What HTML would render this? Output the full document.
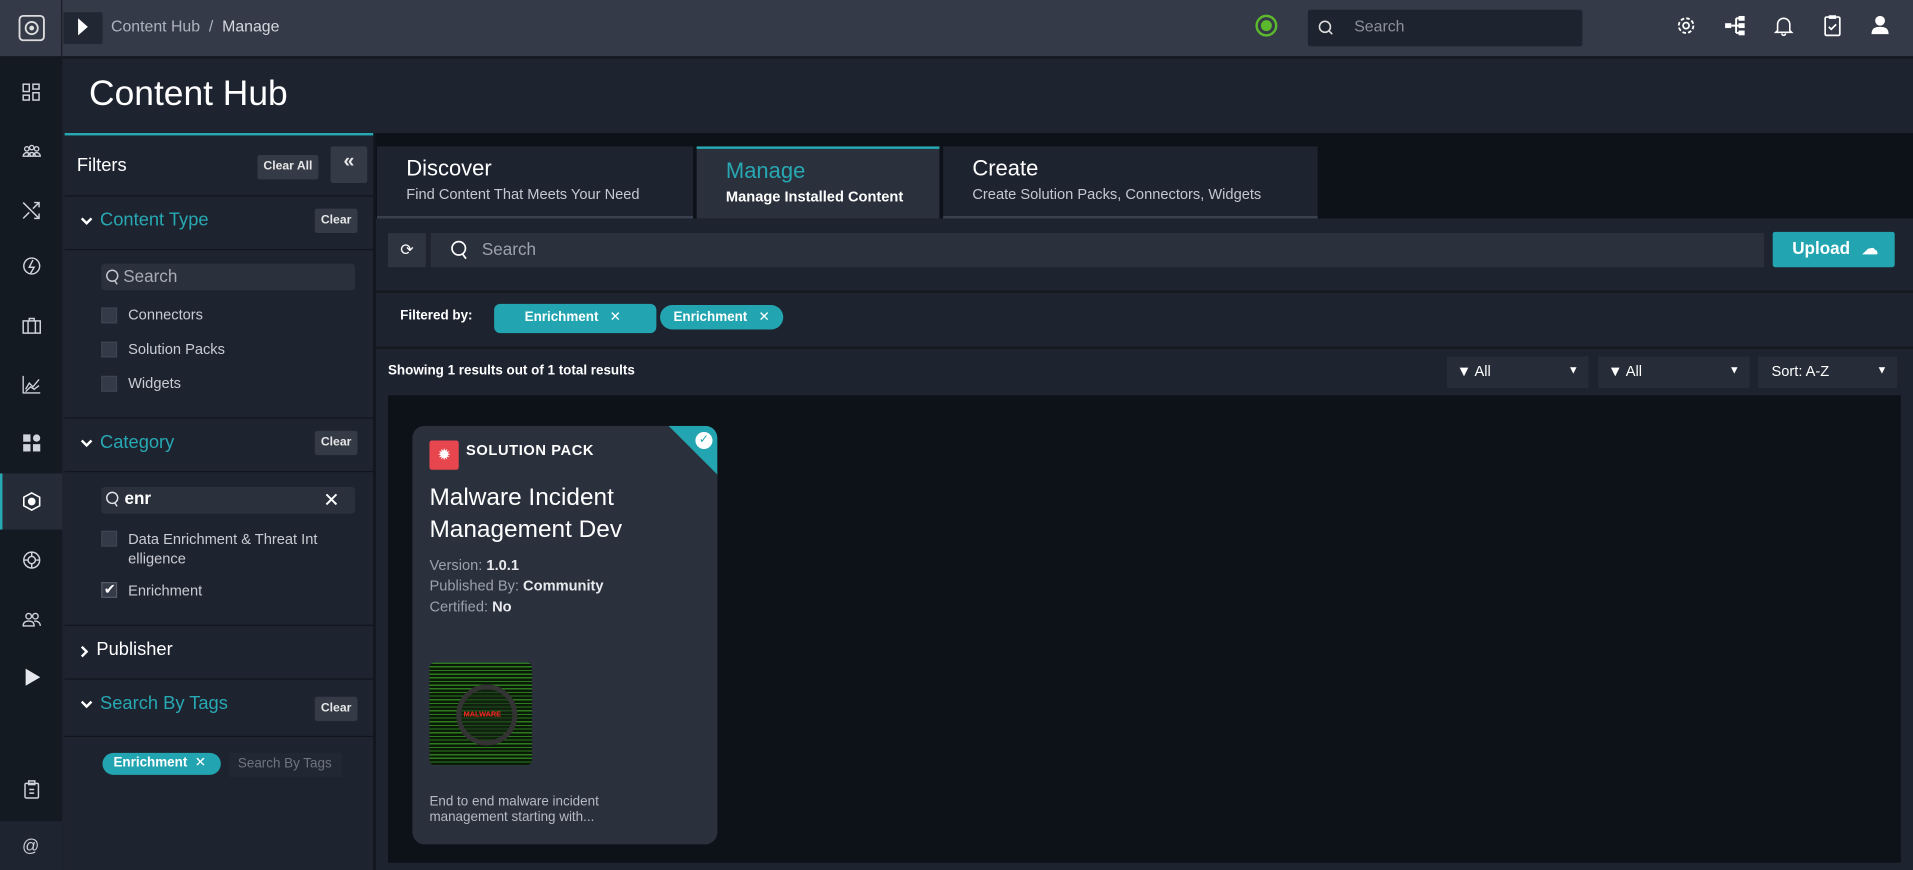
<!DOCTYPE html>
<html><head><meta charset="utf-8"><style>
*{box-sizing:border-box;margin:0;padding:0}
html,body{width:1913px;height:870px;overflow:hidden;background:#1e2330;font-family:"Liberation Sans",sans-serif;color:#e8eaee}
#s{position:absolute;left:0;top:0;width:1568px;height:713px;transform:scale(1.22003,1.2202);transform-origin:0 0;background:#1e2330}
.a{position:absolute}
.teal{color:#27a9b3}
.btn{position:absolute;background:#343a46;color:#e6e6e6;font-size:10px;font-weight:bold;border-radius:2px;text-align:center}
.cb{position:absolute;width:13px;height:13px;background:#343a48;border:1px solid #3d4452}
.lbl{position:absolute;font-size:12px;color:#c9ccd2}
.sep{position:absolute;left:53px;width:253px;height:1px;background:#11151c}
.ico{position:absolute;left:18px;width:16px;height:16px}
</style></head><body><div id="s">
<div class="a" style="left:0;top:0;width:1568px;height:48px;background:#343a48;border-bottom:2px solid #141820"></div>
<div class="a" style="left:0;top:0;width:51px;height:713px;background:#141a22"></div>
<div class="a" style="left:0;top:0;width:51px;height:48px;background:#343a48;border-right:1px solid #1a1f28;border-bottom:2px solid #141820"></div>
<svg class="a" style="left:14px;top:11px" width="24" height="24" viewBox="0 0 24 24"><rect x="2" y="2" width="20" height="20" rx="3" fill="none" stroke="#ddd" stroke-width="1.5"/><circle cx="12" cy="12" r="5" fill="none" stroke="#ddd" stroke-width="1.5"/><circle cx="12" cy="12" r="2" fill="#ddd"/></svg>
<div class="a" style="left:52px;top:10px;width:32px;height:26px;background:#222833"></div>
<div class="a" style="left:64px;top:15px;width:0;height:0;border-left:8px solid #fff;border-top:7px solid transparent;border-bottom:7px solid transparent"></div>
<div class="a" style="left:91px;top:14px;font-size:13px;color:#aeb4be">Content Hub &nbsp;/&nbsp; <span style="color:#d6d9de">Manage</span></div>
<svg class="a" style="left:1028px;top:11px" width="20" height="20" viewBox="0 0 20 20"><circle cx="10" cy="10" r="8" fill="none" stroke="#5cb82c" stroke-width="2"/><circle cx="10" cy="10" r="4.5" fill="#5cb82c"/></svg>
<div class="a" style="left:1072px;top:8px;width:225px;height:30px;background:#1e2330;border-radius:2px"></div>
<svg class="a" style="left:1080px;top:16px" width="14" height="14" viewBox="0 0 14 14"><circle cx="6" cy="6" r="4.5" fill="none" stroke="#ddd" stroke-width="1.3"/><path d="M9 9l3 3" stroke="#ddd" stroke-width="1.3"/></svg>
<div class="a" style="left:1110px;top:14px;font-size:13px;color:#8b919b">Search</div>
<svg class="a" style="left:1373px;top:12px" width="18" height="18" viewBox="0 0 18 18"><circle cx="9" cy="9" r="6" fill="none" stroke="#fff" stroke-width="1.5" stroke-dasharray="3 1.7"/><circle cx="9" cy="9" r="2.5" fill="none" stroke="#fff" stroke-width="1.4"/></svg>
<svg class="a" style="left:1413px;top:13px" width="18" height="16" viewBox="0 0 18 16"><rect x="1" y="6" width="5" height="4" fill="#fff"/><path d="M6 8h4M10 2v12M10 2h6M10 8h6M10 14h6" stroke="#fff" stroke-width="1.6"/><rect x="12" y="0" width="5" height="4" fill="#fff"/><rect x="12" y="6" width="5" height="4" fill="#fff"/><rect x="12" y="12" width="5" height="4" fill="#fff"/></svg>
<svg class="a" style="left:1453px;top:12px" width="18" height="18" viewBox="0 0 18 18"><path d="M4 13V8a5 5 0 0 1 10 0v5l1.5 1.5h-13z M7.5 15.5a1.5 1.5 0 0 0 3 0" fill="none" stroke="#fff" stroke-width="1.3"/></svg>
<svg class="a" style="left:1494px;top:12px" width="16" height="18" viewBox="0 0 16 18"><rect x="2" y="2" width="12" height="15" rx="1" fill="none" stroke="#fff" stroke-width="1.4"/><rect x="5" y="0.5" width="6" height="3" fill="#fff"/><path d="M5 10l2 2 4-4" fill="none" stroke="#fff" stroke-width="1.4"/></svg>
<svg class="a" style="left:1533px;top:12px" width="16" height="17" viewBox="0 0 16 17"><circle cx="8" cy="5" r="4" fill="#fff"/><path d="M1 16c0-5 3-6 7-6s7 1 7 6z" fill="#fff"/></svg>
<svg class="ico" style="top:68px" viewBox="0 0 16 16" fill="none" stroke="#cfd4dc" stroke-width="1.2"><rect x="1" y="1" width="5" height="6"/><rect x="9" y="1" width="5" height="4"/><rect x="1" y="10" width="5" height="4"/><rect x="9" y="8" width="5" height="6"/></svg>
<svg class="ico" style="top:116px" viewBox="0 0 16 16" fill="none" stroke="#cfd4dc" stroke-width="1.1"><circle cx="4" cy="6" r="1.8"/><circle cx="8" cy="5" r="1.8"/><circle cx="12" cy="6" r="1.8"/><path d="M1 12c0-2 2-3 3-3s3 1 3 3zM5 12c0-2 2-3 3-3s3 1 3 3zM9 12c0-2 2-3 3-3s3 1 3 3z"/></svg>
<svg class="ico" style="top:164px" viewBox="0 0 16 16" fill="none" stroke="#cfd4dc" stroke-width="1.2"><path d="M1 2l13 13M14 2L9 7M6 10l-5 5M10 2h4v4M14 11v4h-4"/></svg>
<svg class="ico" style="top:210px" viewBox="0 0 16 16" fill="none" stroke="#cfd4dc" stroke-width="1.2"><circle cx="8" cy="8" r="6.5"/><path d="M9 3L6 9h4l-3 5" /></svg>
<svg class="ico" style="top:259px" viewBox="0 0 16 16" fill="none" stroke="#cfd4dc" stroke-width="1.2"><rect x="1" y="4" width="14" height="10"/><path d="M6 4V2h4v2M5 4v10M11 4v10"/></svg>
<svg class="ico" style="top:307px" viewBox="0 0 16 16" fill="none" stroke="#cfd4dc" stroke-width="1.1"><path d="M1 1v14h14M3 12l3-5 3 3 5-6M3 14l4-4 3 2 4-3"/></svg>
<svg class="ico" style="top:355px" viewBox="0 0 16 16" fill="#cfd4dc"><rect x="1" y="1" width="6" height="6"/><circle cx="12" cy="4" r="3"/><rect x="1" y="9" width="6" height="6"/><rect x="9" y="9" width="6" height="6"/></svg>
<div class="a" style="left:0;top:388px;width:51px;height:46px;background:#252c38;border-left:2px solid #27a9b3"></div>
<svg class="ico" style="top:403px" viewBox="0 0 16 16" fill="none" stroke="#fff" stroke-width="1.3"><path d="M8 1l6.5 3.5v7L8 15l-6.5-3.5v-7z"/><circle cx="8" cy="8" r="2.5" fill="#fff"/></svg>
<svg class="ico" style="top:451px" viewBox="0 0 16 16" fill="none" stroke="#cfd4dc" stroke-width="1.2"><circle cx="8" cy="8" r="6.5"/><circle cx="8" cy="8" r="3"/><path d="M8 1.5v3.5M8 11v3.5M1.5 8H5M11 8h3.5"/></svg>
<svg class="ico" style="top:499px" viewBox="0 0 16 16" fill="none" stroke="#cfd4dc" stroke-width="1.1"><circle cx="5.5" cy="6" r="2.3"/><circle cx="11" cy="6" r="2.3"/><path d="M1 14c0-3 2-4 4.5-4s4.5 1 4.5 4zM10 10c3 0 5 1 5 4"/></svg>
<svg class="ico" style="top:547px" viewBox="0 0 16 16"><path d="M3 1l12 7-12 7z" fill="#e4e7ec"/></svg>
<svg class="ico" style="top:639px" viewBox="0 0 16 16" fill="none" stroke="#cfd4dc" stroke-width="1.2"><rect x="2.5" y="3" width="11" height="12" rx="1"/><rect x="5.5" y="1" width="5" height="3"/><path d="M6 8h4M6 11h4"/></svg>
<div class="a" style="left:0;top:673px;width:51px;height:40px;background:#1e2430"></div>
<div class="a" style="left:18px;top:685px;font-size:14px;color:#c8ccd4">@</div>
<div class="a" style="left:73px;top:61px;font-size:29px;color:#fff">Content Hub</div>
<div class="a" style="left:53px;top:109px;width:253px;height:604px;background:#1e2330;border-top:2px solid #27a9b3"></div>
<div class="a" style="left:306px;top:109px;width:2px;height:604px;background:#11151c"></div>
<div class="a" style="left:63px;top:127px;font-size:15px;color:#fff">Filters</div>
<div class="btn" style="left:211px;top:127px;width:50px;height:20px;line-height:20px">Clear All</div>
<div class="btn" style="left:271px;top:120px;width:30px;height:30px;line-height:26px;font-size:16px">«</div>
<div class="sep" style="top:160px"></div>
<svg class="a" style="left:66px;top:178px" width="10" height="7" viewBox="0 0 10 7"><path d="M1 1l4 4 4-4" fill="none" stroke="#fff" stroke-width="2"/></svg>
<div class="a teal" style="left:82px;top:172px;font-size:15px">Content Type</div>
<div class="btn" style="left:258px;top:171px;width:35px;height:20px;line-height:20px">Clear</div>
<div class="sep" style="top:204px"></div>
<div class="a" style="left:83px;top:216px;width:208px;height:22px;background:#2a303c;border-radius:3px"></div>
<svg class="a" style="left:86px;top:220px" width="13" height="15" viewBox="0 0 13 15"><circle cx="6" cy="6" r="4.5" fill="none" stroke="#c5c9d0" stroke-width="1.2"/><path d="M8 10l2 3" stroke="#c5c9d0" stroke-width="1.2"/></svg>
<div class="a" style="left:101px;top:218px;font-size:14px;color:#a7acb5">Search</div>
<div class="cb" style="left:83px;top:252px"></div><div class="lbl" style="left:105px;top:251px">Connectors</div>
<div class="cb" style="left:83px;top:280px"></div><div class="lbl" style="left:105px;top:279px">Solution Packs</div>
<div class="cb" style="left:83px;top:308px"></div><div class="lbl" style="left:105px;top:307px">Widgets</div>
<div class="sep" style="top:342px"></div>
<svg class="a" style="left:66px;top:360px" width="10" height="7" viewBox="0 0 10 7"><path d="M1 1l4 4 4-4" fill="none" stroke="#fff" stroke-width="2"/></svg>
<div class="a teal" style="left:82px;top:354px;font-size:15px">Category</div>
<div class="btn" style="left:258px;top:353px;width:35px;height:20px;line-height:20px">Clear</div>
<div class="sep" style="top:386px"></div>
<div class="a" style="left:83px;top:399px;width:208px;height:22px;background:#2a303c;border-radius:3px"></div>
<svg class="a" style="left:86px;top:402px" width="13" height="15" viewBox="0 0 13 15"><circle cx="6" cy="6" r="4.5" fill="none" stroke="#e0e3e8" stroke-width="1.2"/><path d="M8 10l2 3" stroke="#e0e3e8" stroke-width="1.2"/></svg>
<div class="a" style="left:102px;top:400px;font-size:14px;color:#fff;font-weight:bold">enr</div>
<div class="a" style="left:265px;top:400px;font-size:16px;color:#fff">✕</div>
<div class="cb" style="left:83px;top:435px"></div><div class="lbl" style="left:105px;top:434px;line-height:16px">Data Enrichment &amp; Threat Int<br>elligence</div>
<div class="cb" style="left:83px;top:477px;border-color:#555c68"></div><div class="a" style="left:85px;top:476px;font-size:12px;color:#fff">✔</div><div class="lbl" style="left:105px;top:477px">Enrichment</div>
<div class="sep" style="top:512px"></div>
<svg class="a" style="left:66px;top:529px" width="7" height="10" viewBox="0 0 7 10"><path d="M1 1l4 4-4 4" fill="none" stroke="#fff" stroke-width="2"/></svg>
<div class="a" style="left:79px;top:524px;font-size:15px;color:#fff">Publisher</div>
<div class="sep" style="top:556px"></div>
<svg class="a" style="left:66px;top:574px" width="10" height="7" viewBox="0 0 10 7"><path d="M1 1l4 4 4-4" fill="none" stroke="#fff" stroke-width="2"/></svg>
<div class="a teal" style="left:82px;top:568px;font-size:15px">Search By Tags</div>
<div class="btn" style="left:258px;top:571px;width:35px;height:20px;line-height:20px">Clear</div>
<div class="sep" style="top:603px"></div>
<div class="a" style="left:84px;top:617px;width:97px;height:18px;background:#22a5b0;border-radius:9px;font-size:11px;font-weight:bold;color:#fff;padding:1px 0 0 9px">Enrichment &nbsp;<span style="font-weight:normal">✕</span></div>
<div class="a" style="left:188px;top:617px;width:92px;height:20px;background:#222833;font-size:11px;color:#6f7580;padding:3px 0 0 7px">Search By Tags</div>
<div class="a" style="left:308px;top:109px;width:1260px;height:70px;background:#0d1118"></div>
<div class="a" style="left:309px;top:120px;width:259px;height:59px;background:#1e2330;border-bottom:2px solid #3a414e"></div>
<div class="a" style="left:333px;top:128px;font-size:18px;color:#fff">Discover</div>
<div class="a" style="left:333px;top:152px;font-size:12px;color:#c4c8cf">Find Content That Meets Your Need</div>
<div class="a" style="left:571px;top:120px;width:199px;height:59px;background:#2a303c;border-top:2px solid #27a9b3"></div>
<div class="a teal" style="left:595px;top:130px;font-size:18px">Manage</div>
<div class="a" style="left:595px;top:154px;font-size:12px;color:#fff;font-weight:bold">Manage Installed Content</div>
<div class="a" style="left:773px;top:120px;width:307px;height:59px;background:#1e2330;border-bottom:2px solid #3a414e"></div>
<div class="a" style="left:797px;top:128px;font-size:18px;color:#fff">Create</div>
<div class="a" style="left:797px;top:152px;font-size:12px;color:#c4c8cf">Create Solution Packs, Connectors, Widgets</div>
<div class="a" style="left:318px;top:191px;width:31px;height:28px;background:#2e3440;text-align:center;line-height:28px;font-size:13px;color:#fff">⟳</div>
<div class="a" style="left:353px;top:191px;width:1093px;height:28px;background:#2a303c"></div>
<svg class="a" style="left:369px;top:196px" width="16" height="18" viewBox="0 0 16 18"><circle cx="7" cy="7.5" r="5.5" fill="none" stroke="#fff" stroke-width="1.4"/><path d="M10 12l3 4" stroke="#fff" stroke-width="1.4"/></svg>
<div class="a" style="left:395px;top:196px;font-size:14px;color:#9da3ad">Search</div>
<div class="a" style="left:1453px;top:190px;width:100px;height:29px;background:#22a5b0;border-radius:2px;font-size:14px;color:#fff;font-weight:bold;padding:5px 0 0 16px">Upload <span style="font-size:13px;margin-left:6px">☁</span></div>
<div class="a" style="left:308px;top:238px;width:1260px;height:2px;background:#141820"></div>
<div class="a" style="left:328px;top:253px;font-size:11px;font-weight:bold;color:#fff">Filtered by:</div>
<div class="a" style="left:405px;top:249px;width:133px;height:24px;background:#22a5b0;border-radius:5px;font-size:11px;font-weight:bold;color:#fff;padding:4px 0 0 25px">Enrichment &nbsp; <span style="font-weight:normal">✕</span></div>
<div class="a" style="left:541px;top:250px;width:101px;height:20px;background:#22a5b0;border-radius:10px;font-size:11px;font-weight:bold;color:#fff;padding:3px 0 0 11px">Enrichment &nbsp; <span style="font-weight:normal">✕</span></div>
<div class="a" style="left:308px;top:284px;width:1260px;height:2px;background:#141820"></div>
<div class="a" style="left:318px;top:298px;font-size:11px;font-weight:bold;color:#fff">Showing 1 results out of 1 total results</div>
<div class="a" style="left:1186px;top:292px;width:116px;height:26px;background:#262c38;font-size:12px;color:#fff;padding:5px 0 0 8px"><b>▼</b> All<span style="position:absolute;right:8px;top:6px;font-size:9px">▼</span></div>
<div class="a" style="left:1310px;top:292px;width:124px;height:26px;background:#262c38;font-size:12px;color:#fff;padding:5px 0 0 8px"><b>▼</b> All<span style="position:absolute;right:8px;top:6px;font-size:9px">▼</span></div>
<div class="a" style="left:1441px;top:292px;width:114px;height:26px;background:#262c38;font-size:12px;color:#fff;padding:5px 0 0 11px">Sort: A-Z<span style="position:absolute;right:8px;top:6px;font-size:9px">▼</span></div>
<div class="a" style="left:318px;top:324px;width:1240px;height:383px;background:#0d1118"></div>
<div class="a" style="left:338px;top:349px;width:250px;height:343px;background:#2a303c;border-radius:10px;overflow:hidden">
 <div class="a" style="right:0;top:0;width:0;height:0;border-top:40px solid #22a5b0;border-left:40px solid transparent"></div>
 <div class="a" style="right:4px;top:5px;width:14px;height:14px;border-radius:7px;background:#fff;color:#22a5b0;font-size:10px;text-align:center;line-height:14px">✓</div>
 <div class="a" style="left:14px;top:12px;width:24px;height:24px;background:#e8464f;border-radius:2px;text-align:center;color:#fff;font-size:13px;line-height:24px">✹</div>
 <div class="a" style="left:44px;top:13px;font-size:12px;color:#fff;font-weight:bold;letter-spacing:.5px">SOLUTION PACK</div>
 <div class="a" style="left:14px;top:46px;font-size:20px;color:#fff;line-height:26px">Malware Incident<br>Management Dev</div>
 <div class="a" style="left:14px;top:106px;font-size:12px;color:#9ca2ac;line-height:17px">Version: <b style="color:#e8eaee">1.0.1</b><br>Published By: <b style="color:#e8eaee">Community</b><br>Certified: <b style="color:#e8eaee">No</b></div>
 <div class="a" style="left:14px;top:194px;width:84px;height:84px;border-radius:4px;background:repeating-linear-gradient(0deg,#0a1a08 0 2px,#2f7a1e 2px 3px)"><div style="position:absolute;left:22px;top:18px;width:50px;height:50px;border-radius:25px;border:4px solid #333;background:rgba(20,40,20,.6)"></div><div style="position:absolute;left:28px;top:40px;font-size:6px;color:#f22;font-weight:bold">MALWARE</div></div>
 <div class="a" style="left:14px;top:302px;font-size:11px;color:#b6bbc3;line-height:13px">End to end malware incident<br>management starting with...</div>
</div>
</div></body></html>
